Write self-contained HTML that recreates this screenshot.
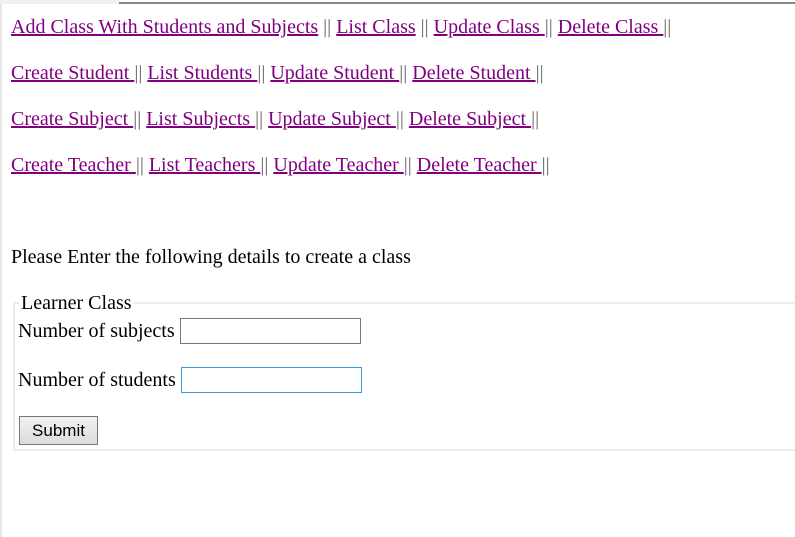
<!DOCTYPE html>
<html><head><style>
html,body{margin:0;padding:0;background:#fff;width:795px;height:537px;overflow:hidden}
body{font-family:"Liberation Serif",serif;font-size:20px;color:#000;position:relative}
.lb{position:absolute;left:0;top:0;width:2px;height:537px;background:#e6e6e6}
.tg{position:absolute;left:0;top:0;width:119px;height:4px;background:#f0f0f0}
.tl{position:absolute;left:119px;top:2px;width:676px;height:2px;background:#888}
.row{position:absolute;left:11px;line-height:24px;white-space:nowrap}
a{color:#800080;text-decoration:underline}
.sep{color:#666}
fieldset{position:absolute;left:13px;top:293px;width:800px;height:158px;margin:0;padding:0;border:2px solid #ececec;box-sizing:border-box}
legend{padding:0 2px;margin-left:4px;line-height:20px}
.f{position:absolute;left:18px;white-space:nowrap;line-height:22px}
input{position:absolute;width:181px;height:26px;box-sizing:border-box;border:1px solid #777;margin:0}
button{position:absolute;left:19px;top:416px;width:79px;height:29px;font-family:"Liberation Sans",sans-serif;font-size:17px;line-height:25px;background:linear-gradient(#f2f2f2,#dcdcdc);border:1px solid #777;padding:0}
</style></head><body>
<div class="lb"></div><div class="tg"></div><div class="tl"></div>
<div class="row" style="top:15px"><a>Add Class With Students and Subjects</a> <span class="sep">||</span> <a>List Class</a> <span class="sep">||</span> <a>Update Class </a><span class="sep">||</span> <a>Delete Class </a><span class="sep">||</span></div>
<div class="row" style="top:61px"><a>Create Student </a><span class="sep">||</span> <a>List Students </a><span class="sep">||</span> <a>Update Student </a><span class="sep">||</span> <a>Delete Student </a><span class="sep">||</span></div>
<div class="row" style="top:107px"><a>Create Subject </a><span class="sep">||</span> <a>List Subjects </a><span class="sep">||</span> <a>Update Subject </a><span class="sep">||</span> <a>Delete Subject </a><span class="sep">||</span></div>
<div class="row" style="top:153px"><a>Create Teacher </a><span class="sep">||</span> <a>List Teachers </a><span class="sep">||</span> <a>Update Teacher </a><span class="sep">||</span> <a>Delete Teacher </a><span class="sep">||</span></div>
<div class="row" style="top:245px">Please Enter the following details to create a class</div>
<fieldset><legend>Learner Class</legend></fieldset>
<div class="f" style="top:320px">Number of subjects</div>
<input style="left:180px;top:318px">
<div class="f" style="top:369px">Number of students</div>
<input style="left:181px;top:367px;border-color:#3a9ad9">
<button>Submit</button>
</body></html>
